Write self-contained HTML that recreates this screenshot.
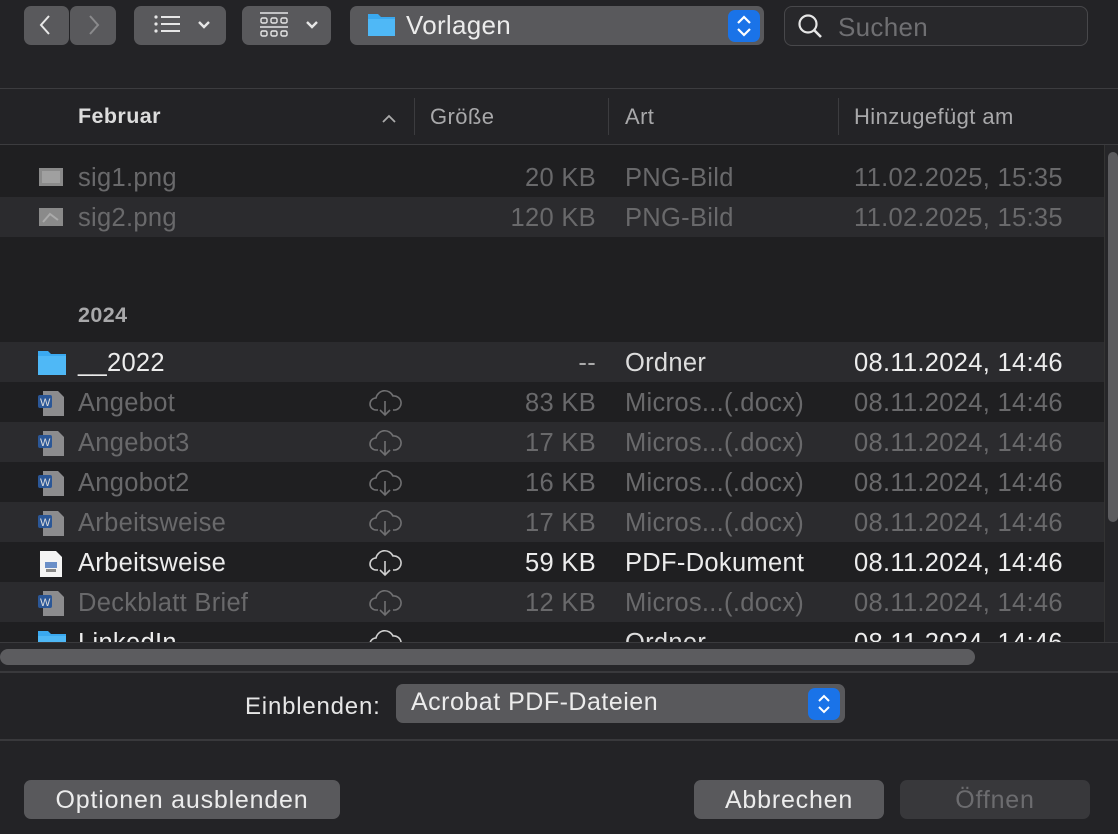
<!DOCTYPE html>
<html><head><meta charset="utf-8"><style>
*{margin:0;padding:0;box-sizing:border-box}
body{width:1118px;height:834px;background:#232326;font-family:"Liberation Sans",sans-serif;position:relative;overflow:hidden;color:#e6e6e6}
.a{position:absolute;white-space:nowrap}
.btn{position:absolute;background:#59595c;border-radius:7px}
.row{position:absolute;left:0;width:1104px;height:40px;line-height:42px;font-size:25.5px;letter-spacing:0.3px;color:#69696b}
.row.l{background:#2b2b2e}.row.d{background:#1f1f21}
.row span{position:absolute;top:0;white-space:nowrap}
.n{left:78px}.s{right:508px;text-align:right}.t{left:625px}.dt{left:854px}
.row.w{color:#ececec}
.ic{position:absolute;left:38px;top:8px}
.cl{position:absolute;left:369px;top:6px}
.hd{font-size:22px;letter-spacing:0.4px;color:#a8a8aa}
</style></head><body>
<!-- toolbar -->
<div class="btn" style="left:24px;top:6px;width:45px;height:39px"></div>
<div class="btn" style="left:70px;top:6px;width:46px;height:39px"></div>
<svg class="a" style="left:36px;top:13px" width="20" height="24"><path d="M13 3 L5 12 L13 21" stroke="#e8e8e8" stroke-width="2" fill="none"/></svg>
<svg class="a" style="left:84px;top:13px" width="20" height="24"><path d="M6 3 L14 12 L6 21" stroke="#8a8a8c" stroke-width="2" fill="none"/></svg>
<div class="btn" style="left:134px;top:6px;width:92px;height:39px"></div>
<svg class="a" style="left:150px;top:12px" width="70" height="26"><g fill="#e6e6e6"><circle cx="6" cy="5" r="1.6"/><circle cx="6" cy="12" r="1.6"/><circle cx="6" cy="19" r="1.6"/><rect x="11" y="4" width="19" height="2"/><rect x="11" y="11" width="19" height="2"/><rect x="11" y="18" width="19" height="2"/></g><path d="M49 10 L54 15 L59 10" stroke="#e6e6e6" stroke-width="2.4" fill="none"/></svg>
<div class="btn" style="left:242px;top:6px;width:89px;height:39px"></div>
<svg class="a" style="left:258px;top:11px" width="70" height="30"><g stroke="#e6e6e6" fill="none" stroke-width="1.4"><line x1="2" y1="2" x2="30" y2="2"/><rect x="3" y="7" width="6" height="5" rx="1.5"/><rect x="13" y="7" width="6" height="5" rx="1.5"/><rect x="23" y="7" width="6" height="5" rx="1.5"/><line x1="2" y1="16" x2="30" y2="16"/><rect x="3" y="20" width="6" height="5" rx="1.5"/><rect x="13" y="20" width="6" height="5" rx="1.5"/><rect x="23" y="20" width="6" height="5" rx="1.5"/></g><path d="M49 11 L54 16 L59 11" stroke="#e6e6e6" stroke-width="2.4" fill="none"/></svg>
<div class="btn" style="left:350px;top:6px;width:414px;height:39px"></div>
<svg class="a" style="left:367px;top:12px" width="30" height="26"><path d="M1 2 h10 l3 3 h14 v19 h-27z" fill="#3aa9f0"/><rect x="1" y="7" width="27" height="17" fill="#4fb8f6"/></svg>
<div class="a" style="left:406px;top:10px;font-size:26px;letter-spacing:0.3px;color:#ececec">Vorlagen</div>
<div class="a" style="left:728px;top:10px;width:32px;height:32px;background:#1a73e8;border-radius:7px"></div>
<svg class="a" style="left:734px;top:14px" width="20" height="24"><path d="M4 9 L10 3 L16 9 M4 15 L10 21 L16 15" stroke="#fff" stroke-width="2.2" fill="none"/></svg>
<div class="a" style="left:784px;top:6px;width:304px;height:40px;border:1px solid #48484b;border-radius:8px;background:#28282b"></div>
<svg class="a" style="left:796px;top:12px" width="30" height="30"><circle cx="12" cy="12" r="8.5" stroke="#e6e6e6" stroke-width="2.2" fill="none"/><path d="M18 18 L25 25" stroke="#e6e6e6" stroke-width="2.6"/></svg>
<div class="a" style="left:838px;top:12px;font-size:26px;letter-spacing:0.3px;color:#6f6f72">Suchen</div>
<!-- header -->
<div class="a" style="left:0;top:88px;width:1118px;height:1px;background:#3c3c3f"></div>
<div class="a" style="left:0;top:144px;width:1118px;height:1px;background:#3c3c3f"></div>
<div class="a" style="left:78px;top:104px;font-size:21.5px;letter-spacing:0.4px;font-weight:bold;color:#dcdcdc">Februar</div>
<svg class="a" style="left:380px;top:110px" width="20" height="16"><path d="M3 12 L9 6 L15 12" stroke="#aaa" stroke-width="1.8" fill="none"/></svg>
<div class="a" style="left:414px;top:98px;width:1px;height:37px;background:#3c3c3f"></div>
<div class="a" style="left:608px;top:98px;width:1px;height:37px;background:#3c3c3f"></div>
<div class="a" style="left:838px;top:98px;width:1px;height:37px;background:#3c3c3f"></div>
<div class="a hd" style="left:430px;top:104px">Größe</div>
<div class="a hd" style="left:625px;top:104px">Art</div>
<div class="a hd" style="left:854px;top:104px">Hinzugefügt am</div>
<!-- table -->
<div class="a" style="left:0;top:145px;width:1118px;height:497px;background:#1f1f21"></div>
<div class="a" style="left:1104px;top:145px;width:14px;height:497px;background:#262629;border-left:1px solid #333"></div>
<div class="a" style="left:1108px;top:152px;width:10px;height:370px;background:#5c5c5f;border-radius:5px"></div>

<div class="row d" style="top:157px"><svg class="ic" width="26" height="24"><rect x="1" y="3" width="24" height="18" fill="#8a8a8a"/><rect x="4" y="6" width="18" height="12" fill="#a0a0a0"/></svg><span class="n">sig1.png</span><span class="s">20 KB</span><span class="t">PNG-Bild</span><span class="dt">11.02.2025, 15:35</span></div>
<div class="row l" style="top:197px"><svg class="ic" width="26" height="24"><rect x="1" y="3" width="24" height="18" fill="#8a8a8a"/><path d="M5 17 L12 9 L20 15" stroke="#aaa" stroke-width="2" fill="none"/></svg><span class="n">sig2.png</span><span class="s">120 KB</span><span class="t">PNG-Bild</span><span class="dt">11.02.2025, 15:35</span></div>
<div class="a" style="left:78px;top:303px;font-size:21.5px;letter-spacing:0.4px;font-weight:bold;color:#a8a8aa">2024</div>

<div class="row l w" style="top:342px"><svg class="ic" width="30" height="26"><path d="M0 1 h10 l3 3 h15 v21 h-28z" fill="#3aa9f0"/><rect x="0" y="6" width="28" height="19" fill="#4fb8f6"/></svg><span class="n">__2022</span><span class="s" style="color:#aaa">--</span><span class="t" style="color:#ddd">Ordner</span><span class="dt">08.11.2024, 14:46</span></div>

<div class="row d" style="top:382px"><svg class="ic" width="28" height="28"><path d="M5 1 h15 l6 6 v19 h-21z" fill="#8c8c8e"/><rect x="0" y="5" width="14" height="13" rx="2" fill="#2b5797"/><text x="2" y="16" font-size="11" fill="#ddd" font-family="Liberation Sans">W</text></svg><span class="n">Angebot</span><svg class="cl" width="34" height="30"><path d="M9 22 H7 a6 6 0 0 1 0-12 a9 9 0 0 1 17-2 a7 7 0 0 1 2 14 h-2" stroke="#707072" stroke-width="1.6" fill="none"/><path d="M16 13 V27 M11 22 L16 27 L21 22" stroke="#707072" stroke-width="1.6" fill="none"/></svg><span class="s">83 KB</span><span class="t">Micros...(.docx)</span><span class="dt">08.11.2024, 14:46</span></div>
<div class="row l" style="top:422px"><svg class="ic" width="28" height="28"><path d="M5 1 h15 l6 6 v19 h-21z" fill="#8c8c8e"/><rect x="0" y="5" width="14" height="13" rx="2" fill="#2b5797"/><text x="2" y="16" font-size="11" fill="#ddd" font-family="Liberation Sans">W</text></svg><span class="n">Angebot3</span><svg class="cl" width="34" height="30"><path d="M9 22 H7 a6 6 0 0 1 0-12 a9 9 0 0 1 17-2 a7 7 0 0 1 2 14 h-2" stroke="#707072" stroke-width="1.6" fill="none"/><path d="M16 13 V27 M11 22 L16 27 L21 22" stroke="#707072" stroke-width="1.6" fill="none"/></svg><span class="s">17 KB</span><span class="t">Micros...(.docx)</span><span class="dt">08.11.2024, 14:46</span></div>
<div class="row d" style="top:462px"><svg class="ic" width="28" height="28"><path d="M5 1 h15 l6 6 v19 h-21z" fill="#8c8c8e"/><rect x="0" y="5" width="14" height="13" rx="2" fill="#2b5797"/><text x="2" y="16" font-size="11" fill="#ddd" font-family="Liberation Sans">W</text></svg><span class="n">Angobot2</span><svg class="cl" width="34" height="30"><path d="M9 22 H7 a6 6 0 0 1 0-12 a9 9 0 0 1 17-2 a7 7 0 0 1 2 14 h-2" stroke="#707072" stroke-width="1.6" fill="none"/><path d="M16 13 V27 M11 22 L16 27 L21 22" stroke="#707072" stroke-width="1.6" fill="none"/></svg><span class="s">16 KB</span><span class="t">Micros...(.docx)</span><span class="dt">08.11.2024, 14:46</span></div>
<div class="row l" style="top:502px"><svg class="ic" width="28" height="28"><path d="M5 1 h15 l6 6 v19 h-21z" fill="#8c8c8e"/><rect x="0" y="5" width="14" height="13" rx="2" fill="#2b5797"/><text x="2" y="16" font-size="11" fill="#ddd" font-family="Liberation Sans">W</text></svg><span class="n">Arbeitsweise</span><svg class="cl" width="34" height="30"><path d="M9 22 H7 a6 6 0 0 1 0-12 a9 9 0 0 1 17-2 a7 7 0 0 1 2 14 h-2" stroke="#707072" stroke-width="1.6" fill="none"/><path d="M16 13 V27 M11 22 L16 27 L21 22" stroke="#707072" stroke-width="1.6" fill="none"/></svg><span class="s">17 KB</span><span class="t">Micros...(.docx)</span><span class="dt">08.11.2024, 14:46</span></div>
<div class="row d w" style="top:542px"><svg class="ic" width="28" height="28"><path d="M2 1 h16 l6 6 v20 h-22z" fill="#f4f4f4"/><rect x="7" y="12" width="12" height="6" fill="#6a8fc8"/><rect x="8" y="19" width="10" height="3" fill="#888"/></svg><span class="n">Arbeitsweise</span><svg class="cl" width="34" height="30"><path d="M9 22 H7 a6 6 0 0 1 0-12 a9 9 0 0 1 17-2 a7 7 0 0 1 2 14 h-2" stroke="#d0d0d0" stroke-width="1.6" fill="none"/><path d="M16 13 V27 M11 22 L16 27 L21 22" stroke="#d0d0d0" stroke-width="1.6" fill="none"/></svg><span class="s">59 KB</span><span class="t">PDF-Dokument</span><span class="dt">08.11.2024, 14:46</span></div>
<div class="row l" style="top:582px"><svg class="ic" width="28" height="28"><path d="M5 1 h15 l6 6 v19 h-21z" fill="#8c8c8e"/><rect x="0" y="5" width="14" height="13" rx="2" fill="#2b5797"/><text x="2" y="16" font-size="11" fill="#ddd" font-family="Liberation Sans">W</text></svg><span class="n">Deckblatt Brief</span><svg class="cl" width="34" height="30"><path d="M9 22 H7 a6 6 0 0 1 0-12 a9 9 0 0 1 17-2 a7 7 0 0 1 2 14 h-2" stroke="#707072" stroke-width="1.6" fill="none"/><path d="M16 13 V27 M11 22 L16 27 L21 22" stroke="#707072" stroke-width="1.6" fill="none"/></svg><span class="s">12 KB</span><span class="t">Micros...(.docx)</span><span class="dt">08.11.2024, 14:46</span></div>
<div class="a" style="left:0;top:622px;width:1104px;height:20px;overflow:hidden"><div class="row d w" style="top:0"><svg class="ic" width="30" height="26"><path d="M0 1 h10 l3 3 h15 v21 h-28z" fill="#3aa9f0"/><rect x="0" y="6" width="28" height="19" fill="#4fb8f6"/></svg><span class="n">LinkedIn</span><svg class="cl" width="34" height="30"><path d="M9 22 H7 a6 6 0 0 1 0-12 a9 9 0 0 1 17-2 a7 7 0 0 1 2 14 h-2" stroke="#d0d0d0" stroke-width="1.6" fill="none"/></svg><span class="s" style="color:#aaa">--</span><span class="t" style="color:#ddd">Ordner</span><span class="dt">08.11.2024, 14:46</span></div></div>
<!-- h scrollbar -->
<div class="a" style="left:0;top:642px;width:1118px;height:30px;background:#262629;border-top:1px solid #3a3a3d"></div>
<div class="a" style="left:0;top:649px;width:975px;height:16px;background:#5c5c5f;border-radius:8px"></div>
<div class="a" style="left:0;top:671px;width:1118px;height:2px;background:#39393c"></div>
<!-- Einblenden -->
<div class="a" style="left:245px;top:693px;font-size:24px;letter-spacing:0.8px;color:#e6e6e6">Einblenden:</div>
<div class="btn" style="left:396px;top:684px;width:449px;height:39px"></div>
<div class="a" style="left:411px;top:688px;font-size:25px;letter-spacing:0.5px;color:#ececec">Acrobat PDF-Dateien</div>
<div class="a" style="left:808px;top:688px;width:32px;height:32px;background:#1a73e8;border-radius:7px"></div>
<svg class="a" style="left:814px;top:692px" width="20" height="24"><path d="M5 9 L10 4 L15 9 M5 15 L10 20 L15 15" stroke="#fff" stroke-width="2" fill="none"/></svg>
<div class="a" style="left:0;top:739px;width:1118px;height:2px;background:#39393c"></div>
<!-- buttons -->
<div class="btn" style="left:24px;top:780px;width:316px;height:39px"></div>
<div class="a" style="left:24px;top:786px;width:316px;text-align:center;font-size:25px;letter-spacing:0.8px;color:#ececec">Optionen ausblenden</div>
<div class="btn" style="left:694px;top:780px;width:190px;height:39px"></div>
<div class="a" style="left:694px;top:786px;width:190px;text-align:center;font-size:25px;letter-spacing:0.8px;color:#ececec">Abbrechen</div>
<div class="btn" style="left:900px;top:780px;width:190px;height:39px;background:#38383b"></div>
<div class="a" style="left:900px;top:786px;width:190px;text-align:center;font-size:25px;letter-spacing:0.8px;color:#6c6c6f">Öffnen</div>
</body></html>
